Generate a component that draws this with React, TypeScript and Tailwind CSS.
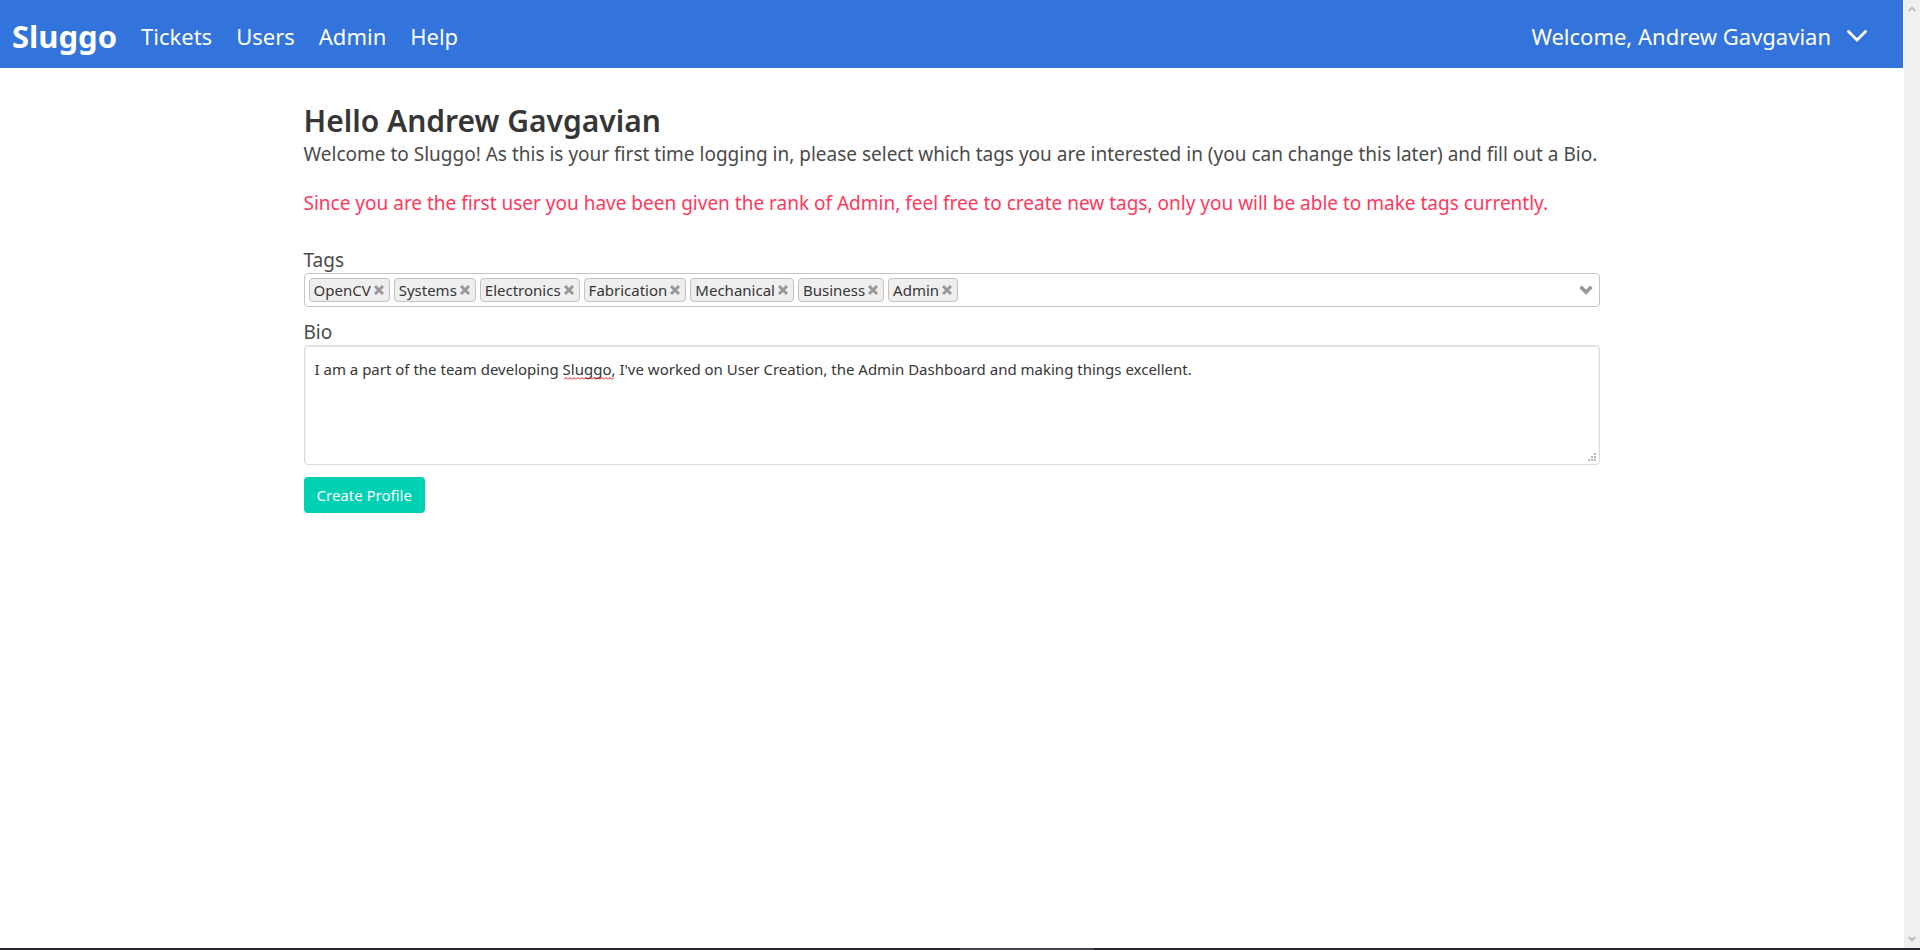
import { useState } from "react";

const links = ["Tickets", "Users", "Admin", "Help"];

const initialTags = [
  "OpenCV",
  "Systems",
  "Electronics",
  "Fabrication",
  "Mechanical",
  "Business",
  "Admin",
];

const gripDots = [
  [6, 0],
  [3, 3],
  [6, 3],
  [0, 6],
  [3, 6],
  [6, 6],
];

function Navbar() {
  return (
    <nav className="flex h-[68px] items-center justify-between bg-[#3273dc] pl-3 pr-9 pt-1 text-white">
      <div className="flex items-center gap-6 text-[22px] leading-9">
        <a href="#home" className="text-[31px] font-bold">
          Sluggo
        </a>
        {links.map((link) => (
          <a key={link} href={`#${link.toLowerCase()}`}>
            {link}
          </a>
        ))}
      </div>
      <button type="button" className="flex items-center gap-4 text-[22px] leading-9">
        Welcome, Andrew Gavgavian
        <svg width="20" height="12" viewBox="0 0 20 12" fill="none" aria-hidden="true">
          <path d="M1.500 1.500 10 10l8.500-8.500" stroke="currentColor" strokeWidth="2.800" strokeLinecap="round" />
        </svg>
      </button>
    </nav>
  );
}

function Tag({ name, onRemove }: { name: string; onRemove: () => void }) {
  return (
    <span className="flex h-6 items-center gap-0.5 rounded border border-[#c1c1c1] bg-[#efefef] px-1 text-[15px] text-[#363636]">
      {name}
      <button type="button" aria-label={`Remove ${name}`} onClick={onRemove}>
        <svg width="12" height="12" viewBox="0 0 12 12" aria-hidden="true">
          <path d="M2 2l8 8M10 2l-8 8" stroke="#999" strokeWidth="3" />
        </svg>
      </button>
    </span>
  );
}

function ScrollRail() {
  return (
    <div className="ml-px flex w-4 flex-col items-center justify-between bg-[#f0f0f0] py-1.5" aria-hidden="true">
      <svg width="8" height="6" viewBox="0 0 8 6" fill="none">
        <path d="M.7 5 4 1.700 7.300 5" stroke="#bdbdbd" strokeWidth="2" />
      </svg>
      <svg width="8" height="6" viewBox="0 0 8 6" fill="none">
        <path d="M.7 1 4 4.300 7.300 1" stroke="#bdbdbd" strokeWidth="2" />
      </svg>
    </div>
  );
}

export default function App() {
  const [tags, setTags] = useState(initialTags);
  const [bio, setBio] = useState(
    "I am a part of the team developing Sluggo, I've worked on User Creation, the Admin Dashboard and making things excellent."
  );

  return (
    <div className="flex min-h-screen flex-col bg-white font-['Noto_Sans',sans-serif] text-[#4a4a4a]">
      <div className="flex grow">
        <div className="min-w-0 grow">
          <Navbar />
          <main className="mx-auto max-w-[1344px] px-6 pt-[35px] text-[19px]">
            <h1 className="text-[30px] font-semibold leading-9 text-[#363636]">Hello Andrew Gavgavian</h1>
            <p className="leading-[30px]">
              Welcome to Sluggo! As this is your first time logging in, please select which tags you are
              interested in (you can change this later) and fill out a Bio.
            </p>
            <p className="mt-[19px] leading-[30px] text-[#ff3860]">
              Since you are the first user you have been given the rank of Admin, feel free to create new
              tags, only you will be able to make tags currently.
            </p>

            <form className="mt-[29px] flex flex-col items-start" onSubmit={(event) => event.preventDefault()}>
              <span id="tags-label" className="leading-[26px]">
                Tags
              </span>
              <div
                role="group"
                aria-labelledby="tags-label"
                className="flex w-full items-center justify-between rounded border border-[#c4c4c4] py-1 pl-1 pr-1.5"
              >
                <div className="flex flex-wrap gap-1">
                  {tags.map((tag) => (
                    <Tag key={tag} name={tag} onRemove={() => setTags(tags.filter((other) => other !== tag))} />
                  ))}
                </div>
                <button type="button" aria-label="Show tags">
                  <svg width="14" height="10" viewBox="0 0 14 10" fill="none" aria-hidden="true">
                    <path d="M1.500 1.700 7 7.200l5.500-5.500" stroke="#999" strokeWidth="3.600" />
                  </svg>
                </button>
              </div>

              <label htmlFor="bio" className="mt-3 leading-[26px]">
                Bio
              </label>
              <div className="relative w-full">
                <textarea
                  id="bio"
                  value={bio}
                  spellCheck={false}
                  onChange={(event) => setBio(event.target.value)}
                  className="block h-[120px] w-full resize-none rounded border border-[#dbdbdb] px-2.5 py-[11px] text-[15px] leading-6 text-[#363636] shadow-[inset_0_1px_2px_rgba(10,10,10,0.1)] outline-none"
                />
                <svg className="absolute left-[260px] top-8" width="50" height="3" aria-hidden="true">
                  <defs>
                    <pattern id="squiggle" width="4" height="3" patternUnits="userSpaceOnUse">
                      <path d="M0 2.500 2 .5 4 2.500" fill="none" stroke="#e81010" />
                    </pattern>
                  </defs>
                  <rect width="50" height="3" fill="url(#squiggle)" />
                </svg>
                <svg className="absolute bottom-1 right-1" width="8" height="8" fill="#b8b8b8" aria-hidden="true">
                  {gripDots.map(([x, y]) => (
                    <rect key={`${x}-${y}`} x={x} y={y} width="2" height="2" />
                  ))}
                </svg>
              </div>
              <button
                type="submit"
                className="mt-3 h-9 rounded bg-[#00d1b2] px-[13px] text-[15px] text-white"
              >
                Create Profile
              </button>
            </form>
          </main>
        </div>
        <ScrollRail />
      </div>
      <div className="flex h-0.5 bg-[#23272d]">
        <div className="ml-[50%] w-[7%] bg-[#42444a]" />
      </div>
    </div>
  );
}
